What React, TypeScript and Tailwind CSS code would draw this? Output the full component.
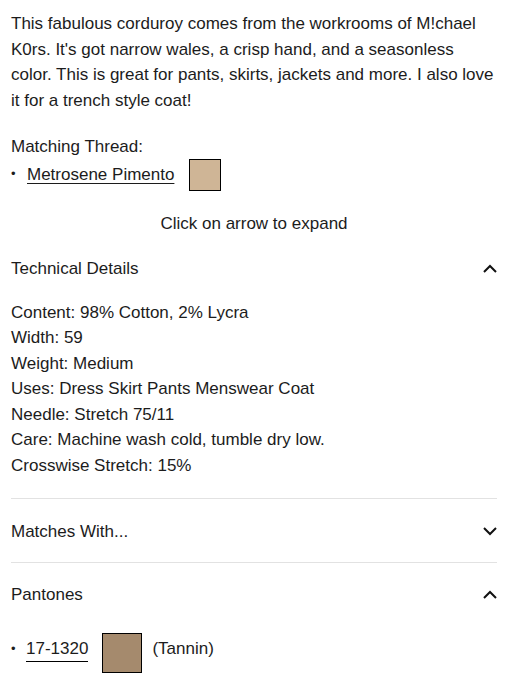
import React from 'react';

function Chevron({ up }: { up?: boolean }) {
  return (
    <svg width="14" height="9" viewBox="0 0 14 9" className="shrink-0">
      <polyline
        points={up ? '1,8 7,2 13,8' : '1,1 7,7 13,1'}
        fill="none"
        stroke="#111"
        strokeWidth="2"
      />
    </svg>
  );
}

export default function App() {
  return (
    <div
      className="bg-white text-[#1c1c1c] text-[17px] leading-[25.5px] pl-[11px] pt-[11px] w-[497px] min-h-[697px]"
      style={{ fontFamily: '"Liberation Sans", Arial, sans-serif' }}
    >
      <p>
        This fabulous corduroy comes from the workrooms of M!chael K0rs. It's got narrow wales, a crisp hand, and a
        seasonless color. This is great for pants, skirts, jackets and more. I also love it for a trench style coat!
      </p>

      <p className="mt-[21px]">Matching Thread:</p>
      <ul>
        <li className="flex items-center h-8 -mt-px">
          <span className="w-4 text-[13px] leading-none -mt-[2px]">•</span>
          <a className="underline underline-offset-[3px] decoration-1">Metrosene Pimento</a>
          <span className="ml-[15px] w-8 h-8 border border-black bg-[#cfb596]" />
        </li>
      </ul>

      <p className="mt-[20px] text-center">Click on arrow to expand</p>

      <div className="mt-[20px]">
        <div className="flex items-center justify-between">
          <span>Technical Details</span>
          <Chevron up />
        </div>
        <div className="mt-[18px] pb-5 border-b border-[#e2e2e2]">
          <p>Content: 98% Cotton, 2% Lycra</p>
          <p>Width: 59</p>
          <p>Weight: Medium</p>
          <p>Uses: Dress Skirt Pants Menswear Coat</p>
          <p>Needle: Stretch 75/11</p>
          <p>Care: Machine wash cold, tumble dry low.</p>
          <p>Crosswise Stretch: 15%</p>
        </div>
      </div>

      <div className="flex items-center justify-between pt-[20px] pb-[17px] border-b border-[#e2e2e2]">
        <span>Matches With...</span>
        <Chevron />
      </div>

      <div className="pt-[19px]">
        <div className="flex items-center justify-between">
          <span>Pantones</span>
          <Chevron up />
        </div>
        <ul className="mt-[26px]">
          <li className="flex items-start h-10">
            <span className="w-[15px] text-[13px] leading-none mt-[9px]">•</span>
            <a className="mt-[4px] border-b border-black leading-[24px]">17-1320</a>
            <span className="ml-[14px] w-10 h-10 border border-black bg-[#a58a6d]" />
            <span className="ml-[10px] mt-[4px] leading-[24px]">(Tannin)</span>
          </li>
        </ul>
      </div>
    </div>
  );
}
